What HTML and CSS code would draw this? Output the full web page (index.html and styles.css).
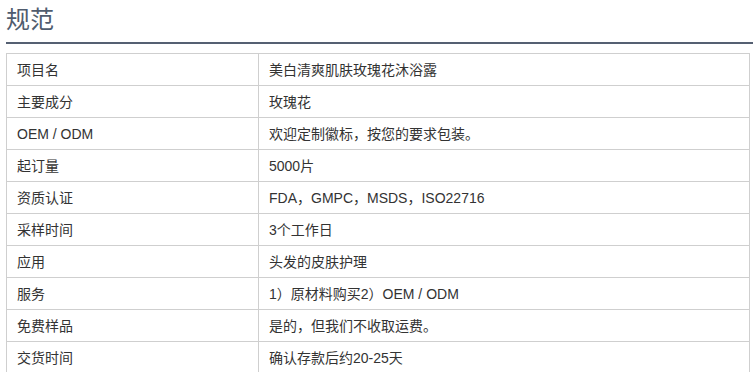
FILE: index.html
```html
<!DOCTYPE html>
<html lang="zh">
<head>
<meta charset="utf-8">
<link rel="stylesheet" href="styles.css">
</head>
<body>
<div class="page">
  <h2 class="title">规范</h2>
  <div class="rule"></div>
  <table class="spec">
    <tr><td class="k">项目名</td><td>美白清爽肌肤玫瑰花沐浴露</td></tr>
    <tr><td class="k">主要成分</td><td>玫瑰花</td></tr>
    <tr><td class="k">OEM / ODM</td><td>欢迎定制徽标，按您的要求包装。</td></tr>
    <tr><td class="k">起订量</td><td>5000片</td></tr>
    <tr><td class="k">资质认证</td><td>FDA，GMPC，MSDS，ISO22716</td></tr>
    <tr><td class="k">采样时间</td><td>3个工作日</td></tr>
    <tr><td class="k">应用</td><td>头发的皮肤护理</td></tr>
    <tr><td class="k">服务</td><td>1）原材料购买2）OEM / ODM</td></tr>
    <tr><td class="k">免费样品</td><td>是的，但我们不收取运费。</td></tr>
    <tr><td class="k">交货时间</td><td>确认存款后约20-25天</td></tr>
  </table>
</div>
</body>
</html>
```

FILE: styles.css
```css
html, body {
  margin: 0;
  padding: 0;
  background: #fff;
}
.page {
  padding-left: 6px;
  font-family: "Liberation Sans", "Noto Sans CJK SC", sans-serif;
  color: #333;
}
.title {
  margin: 0;
  height: 42px;
  font-size: 24px;
  font-weight: normal;
  line-height: 40px;
  color: #505c6e;
  font-family: "Liberation Sans", "Noto Sans CJK SC", sans-serif;
}
.rule {
  height: 2px;
  background: #556072;
  margin-bottom: 9px;
}
.spec {
  width: 744px;
  border-collapse: collapse;
  font-size: 14px;
}
.spec td {
  border: 1px solid #cfcfcf;
  height: 32px;
  padding: 0 0 0 10px;
  box-sizing: border-box;
  vertical-align: middle;
  line-height: 18px;
}
.spec td.k {
  width: 252px;
}
```
